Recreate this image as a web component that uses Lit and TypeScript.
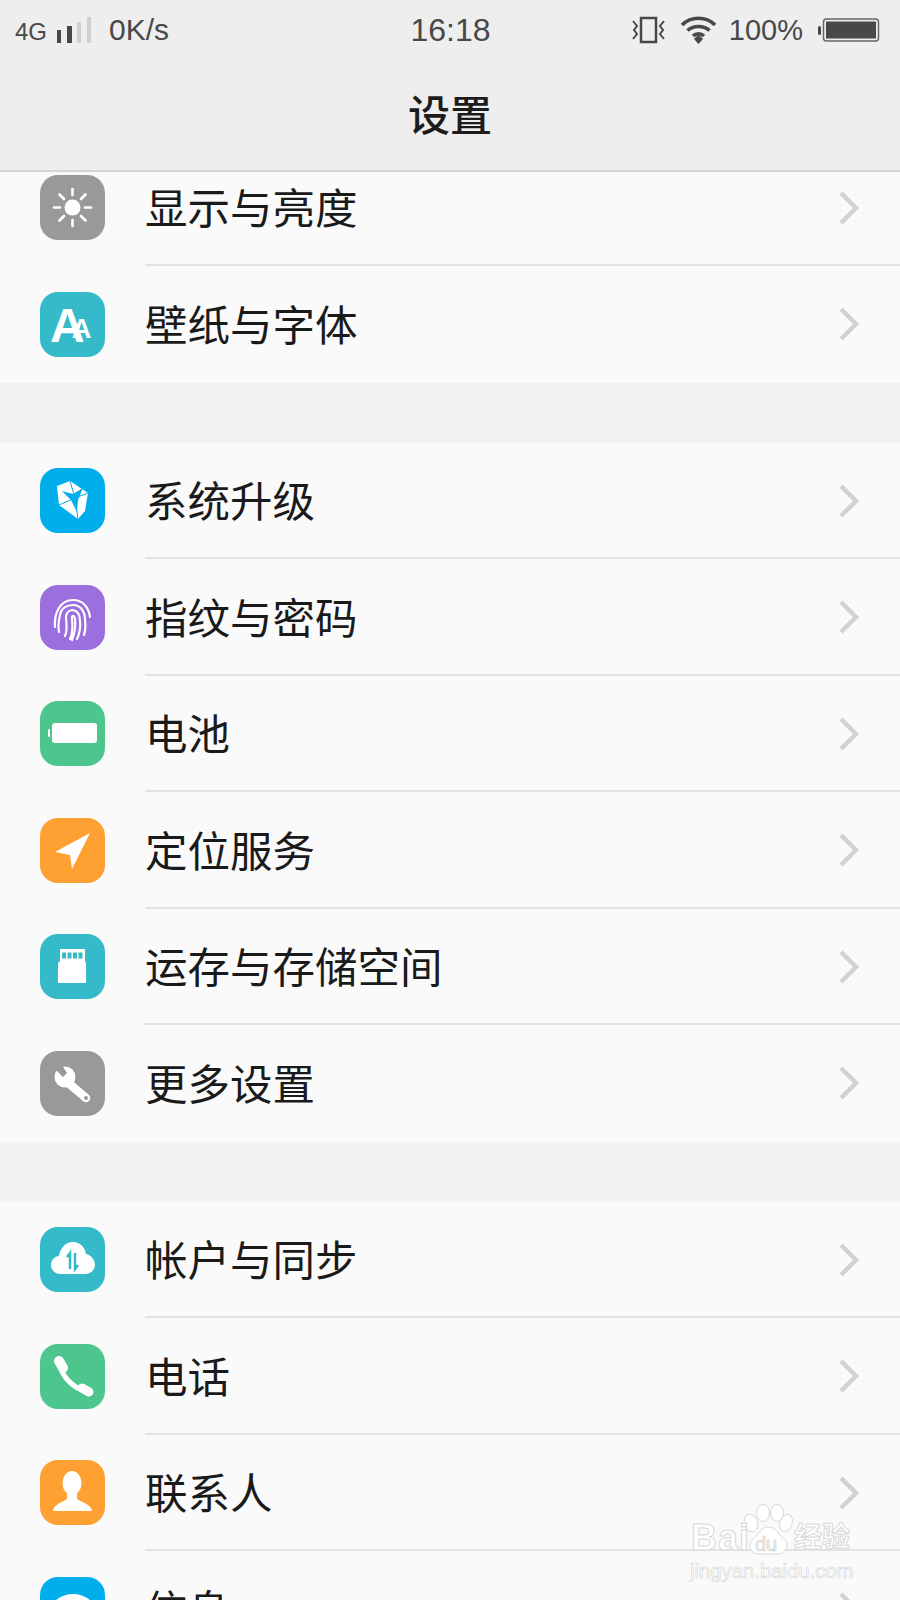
import { LitElement, html, css, svg } from "lit";
import { customElement } from "lit/decorators.js";

const W = "#fff";
const icons: Record<string, unknown> = {
  sun: svg`<circle cx="32.5" cy="32.5" r="8" fill="${W}"/><g stroke="${W}" stroke-width="2.700" stroke-linecap="round"><path d="M32.5 14v6M32.5 45v6M14 32.5h6M45 32.5h6M19.5 19.5l4.500 4.500M41 41l4.500 4.500M45.500 19.500l-4.500 4.500M24 41l-4.500 4.500"/></g>`,
  font: svg`<text x="10" y="50" class="aa"><tspan font-size="48">A</tspan><tspan font-size="27" dx="-13" dy="-4">A</tspan></text>`,
  update: svg`<path d="M17 18 30 13 48 25 45 43 38 51 19 37Z" fill="${W}"/><path d="M43 20 33 26 22 23 31 32 37 44 38 32Z" fill="#00aeec"/><path d="M35 30 48 25M35 30 19 37M35 30 38 51M35 30 30 13" stroke="#00aeec" stroke-width="1"/>`,
  finger: svg`<g fill="none" stroke="${W}" stroke-width="2.200" stroke-linecap="round"><path d="M15 42C14 28 20 15 33 15C44 15 49 24 50 32"/><path d="M19 47C18 42 19 34 20 30C21 23 27 20 33 20C41 20 45 27 45 35C46 42 45 47 44 50"/><path d="M25 51C28 46 26 36 26 31C27 27 30 25 33 25C38 26 40 30 40 36C41 42 39 50 37 54"/><path d="M30 54C34 46 32 38 32 32C33 30 35 31 35 34C36 42 34 50 32 55"/></g>`,
  battery: svg`<rect x="12" y="22" width="45" height="20" rx="3" fill="${W}"/><rect x="8" y="28" width="2" height="8" rx="1" fill="${W}"/>`,
  location: svg`<path d="M50 15 15 34 30 37 32 51Z" fill="${W}"/>`,
  sd: svg`<path d="M20 15H45V27L46 29V49H18V29L20 27Z" fill="${W}"/><g fill="#35bac9"><rect x="22" y="18.500" width="4" height="6"/><rect x="27.500" y="18.500" width="4" height="6"/><rect x="33" y="18.500" width="4" height="6"/><rect x="38.500" y="18.500" width="4" height="6"/></g>`,
  wrench: svg`<path d="M26 30 46 47" stroke="${W}" stroke-width="8.500" stroke-linecap="round"/><circle cx="25" cy="26" r="10.500" fill="${W}"/><path d="M13 16 23 26 27 22 20 11 10 14Z" fill="#999"/><circle cx="46" cy="47" r="2" fill="#999"/>`,
  cloud: svg`<path d="M21 47C15 47 11 43 11 38C11 33 15 29 19 29C20 21 26 15 33 15C40 15 45 20 46 27C51 28 55 33 55 38C55 43 50 47 45 47Z" fill="${W}"/><path d="M30 42V26L27 30M35 26V42L38 38" fill="none" stroke="#35bac9" stroke-width="2.500"/>`,
  phone: svg`<g fill="none" stroke="${W}" stroke-linecap="round"><path d="M20 20C21 31 32 44 46 47" stroke-width="5"/><path d="M19 17 23 24" stroke-width="10"/><path d="M42 44 49 48" stroke-width="9"/></g>`,
  contact: svg`<ellipse cx="32" cy="23" rx="9.500" ry="12" fill="${W}"/><path d="M13 51C14 44 23 42 27 39V31H37V39C41 42 51 44 52 51Z" fill="${W}"/>`,
  bubble: svg`<ellipse cx="33" cy="36" rx="23" ry="19" fill="${W}"/>`,
};

type Row = { t: string; i: string; c: string };
const groups: Row[][] = [
  [
    { t: "显示与亮度", i: "sun", c: "#999999" },
    { t: "壁纸与字体", i: "font", c: "#35bac9" },
  ],
  [
    { t: "系统升级", i: "update", c: "#00aeec" },
    { t: "指纹与密码", i: "finger", c: "#9b6fdd" },
    { t: "电池", i: "battery", c: "#4dc68e" },
    { t: "定位服务", i: "location", c: "#ffa033" },
    { t: "运存与存储空间", i: "sd", c: "#35bac9" },
    { t: "更多设置", i: "wrench", c: "#999999" },
  ],
  [
    { t: "帐户与同步", i: "cloud", c: "#35bac9" },
    { t: "电话", i: "phone", c: "#4dc68e" },
    { t: "联系人", i: "contact", c: "#ffa033" },
    { t: "信息", i: "bubble", c: "#00aeec" },
  ],
];

@customElement("app-root")
export class AppRoot extends LitElement {
  static styles = css`
    :host {
      display: block;
      position: relative;
      width: 900px;
      height: 1600px;
      overflow: hidden;
      background: #f2f2f2;
      font-family: "Noto Sans CJK SC", "Noto Sans", sans-serif;
    }
    .top {
      position: relative;
      z-index: 2;
      height: 172px;
      background: #eeeeee;
      border-bottom: 2px solid #d4d4d4;
      box-sizing: border-box;
      display: flex;
      flex-direction: column;
    }
    .status {
      height: 60px;
      display: grid;
      grid-template-columns: 1fr auto 1fr;
      align-items: center;
      padding: 0 20px 0 15px;
      color: #484848;
      font-family: "Liberation Sans", sans-serif;
    }
    .left, .right {
      display: flex;
      align-items: center;
    }
    .right {
      justify-content: flex-end;
    }
    .net {
      font-size: 24px;
      margin-top: 4px;
    }
    .speed {
      font-size: 30px;
      margin-left: 17px;
    }
    .signal {
      margin-left: 9px;
      display: block;
    }
    .time {
      font-size: 32px;
      margin-left: 6px;
    }
    .pct {
      font-size: 29px;
      margin: 0 15px 0 12px;
    }
    .wifi { margin-left: 15px; display: block; }
    .vib, .bat { display: block; }
    .title {
      flex: 1;
      display: flex;
      align-items: center;
      justify-content: center;
      font-size: 42px;
      font-weight: 500;
      color: #1c1c1c;
      padding-bottom: 5px;
    }
    .list {
      margin-top: -22.5px;
      display: flex;
      flex-direction: column;
      gap: 60px;
    }
    .group {
      background: #fafafa;
    }
    .row {
      height: 116.5px;
      display: flex;
      align-items: center;
      padding-left: 40px;
      box-sizing: border-box;
    }
    .icon {
      width: 65px;
      height: 65px;
      border-radius: 18px;
      flex: none;
      display: block;
    }
    .body {
      flex: 1;
      align-self: stretch;
      margin-left: 40px;
      display: flex;
      align-items: center;
      justify-content: space-between;
      padding-right: 40px;
      border-bottom: 2px solid #e2e2e2;
      box-sizing: border-box;
    }
    .row:last-child .body {
      border-bottom: 2px solid transparent;
    }
    .label {
      font-size: 42.5px;
      color: #1a1a1a;
      line-height: 1;
      padding-bottom: 1px;
    }
    .chev {
      display: block;
      flex: none;
      margin-top: 2px;
    }
    .aa {
      fill: #fff;
      font-family: "Liberation Sans", sans-serif;
      font-weight: 700;
    }
    .mark {
      position: absolute;
      left: 688px;
      top: 1510px;
      width: 170px;
      height: 72px;
      z-index: 3;
      color: #fff;
      -webkit-text-stroke: 1px #d8d8d8;
    }
    .mark span {
      position: absolute;
      line-height: 1;
      white-space: nowrap;
    }
    .bai {
      left: 3px;
      top: 10px;
      font: 700 36px "Liberation Sans", sans-serif;
      letter-spacing: 1px;
    }
    .jy {
      left: 106px;
      top: 11px;
      font: 700 28px "Noto Sans CJK SC", sans-serif;
    }
    .url {
      left: 2px;
      top: 51px;
      font: 400 20.300px "Liberation Sans", sans-serif;
      -webkit-text-stroke: 0.7px #d8d8d8;
    }
    .paw {
      position: absolute;
      left: 52px;
      top: -7px;
      display: block;
    }
    .du {
      left: 67px;
      top: 24px;
      font: 400 20px "Liberation Sans", sans-serif;
      color: #fafafa;
      -webkit-text-stroke: 0.7px #cccccc;
    }
  `;

  private row(r: Row) {
    return html`<div class="row">
      <svg class="icon" style="background:${r.c}" viewBox="0 0 65 65">${icons[r.i]}</svg>
      <div class="body">
        <span class="label">${r.t}</span>
        <svg class="chev" width="22" height="36" viewBox="0 0 22 36">
          <path d="M3 3 18 18 3 33" fill="none" stroke="#d2d2d2" stroke-width="4.500"/>
        </svg>
      </div>
    </div>`;
  }

  render() {
    return html`
      <div class="top">
        <div class="status">
          <div class="left">
            <span class="net">4G</span>
            <svg class="signal" width="36" height="26" viewBox="0 0 36 26">
              <rect x="1" y="13" width="4" height="13" fill="#484848"/>
              <rect x="11" y="9" width="5" height="17" fill="#484848"/>
              <rect x="21" y="5" width="4" height="21" fill="#d0d0d0"/>
              <rect x="31" y="0" width="4" height="26" fill="#d0d0d0"/>
            </svg>
            <span class="speed">0K/s</span>
          </div>
          <span class="time">16:18</span>
          <div class="right">
            <svg class="vib" width="33" height="28" viewBox="0 0 33 28" fill="none" stroke="#484848" stroke-width="2">
              <rect x="9" y="2" width="15" height="24" stroke-width="2.500"/>
              <path d="M1 5 5 10 2 14 5 18 1 23M32 5 28 10 31 14 28 18 32 23"/>
            </svg>
            <svg class="wifi" width="37" height="28" viewBox="0 0 37 28" fill="none" stroke="#484848" stroke-width="3.500">
              <path d="M2 9C11 0 26 0 35 9M7.500 14.500C13 9 24 9 29.500 14.500M13 20C16 17 21 17 24 20"/>
              <path d="M14 23 18.500 18.500 23 23 18.500 28Z" fill="#484848" stroke="none"/>
            </svg>
            <span class="pct">100%</span>
            <svg class="bat" width="62" height="24" viewBox="0 0 62 24">
              <rect x="0" y="8" width="3" height="9" rx="1.500" fill="#484848"/>
              <rect x="5.500" y="1" width="55" height="22" rx="3" fill="none" stroke="#666" stroke-width="1.500"/>
              <rect x="8" y="3.500" width="50" height="17" fill="#484848"/>
            </svg>
          </div>
        </div>
        <div class="title">设置</div>
      </div>
      <div class="list">
        ${groups.map((g) => html`<div class="group">${g.map((r) => this.row(r))}</div>`)}
      </div>
      <div class="mark">
        <svg class="paw" width="60" height="60" viewBox="0 0 60 60" fill="#fff" stroke="#d8d8d8" stroke-width="1">
          <ellipse cx="11" cy="20" rx="6.500" ry="9" transform="rotate(-20 11 20)"/>
          <ellipse cx="23" cy="10" rx="6.500" ry="8.500"/>
          <ellipse cx="37" cy="10" rx="6.500" ry="8.500"/>
          <ellipse cx="46" cy="20" rx="6" ry="9" transform="rotate(20 46 20)"/>
          <path d="M28 24C37 24 39 33 45 37C50 42 45 51 38 51C33 51 24 51 19 51C11 51 7 43 12 37C18 33 20 24 28 24Z"/>
        </svg>
        <span class="du">du</span>
        <span class="bai">Bai</span>
        <span class="jy">经验</span>
        <span class="url">jingyan.baidu.com</span>
      </div>
    `;
  }
}
